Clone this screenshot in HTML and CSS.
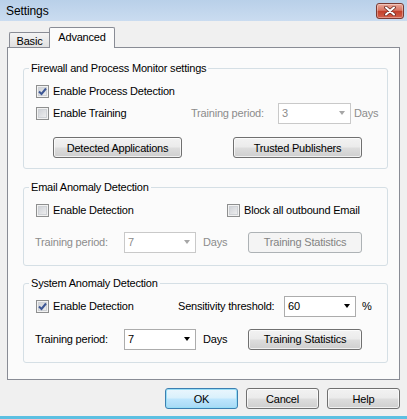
FILE: index.html
```html
<!DOCTYPE html>
<html>
<head>
<meta charset="utf-8">
<title>Settings</title>
<link rel="stylesheet" href="styles.css">
</head>
<body>
<div class="window">
  <div class="titlebar">
    <span class="title">Settings</span>
    <span class="close">
      <svg width="14" height="10" viewBox="0 0 14 10">
        <path d="M3 1.5 L11 8.5 M11 1.5 L3 8.5" stroke="#6a2a22" stroke-width="3.6" stroke-linecap="round"/>
        <path d="M3 1.5 L11 8.5 M11 1.5 L3 8.5" stroke="#ffffff" stroke-width="2" stroke-linecap="round"/>
      </svg>
    </span>
  </div>
  <div class="content">
    <div class="tabs">
      <div class="tab basic">Basic</div>
      <div class="tab active">Advanced</div>
    </div>
    <div class="panel">
      <fieldset class="group g1">
        <legend>Firewall and Process Monitor settings</legend>
        <div class="inner">
          <div class="row">
            <span class="check"><span class="box checked"><svg width="11" height="11" viewBox="0 0 11 11"><path d="M2 5.5 L4.5 8 L9 2.5" fill="none" stroke="#3d5795" stroke-width="2"/></svg></span>Enable Process Detection</span>
          </div>
          <div class="row">
            <span class="check c-training">
              <span class="box"></span>Enable Training</span>
            <span class="lbl dis l-period1">Training period:</span>
            <span class="combo dis w73"><span>3</span><i class="arrow"></i></span>
            <span class="unit dis u-days1">Days</span>
          </div>
          <div class="btnrow">
            <span class="btn wide">Detected Applications</span>
            <span class="btn wide">Trusted Publishers</span>
          </div>
        </div>
      </fieldset>

      <fieldset class="group g2">
        <legend>Email Anomaly Detection</legend>
        <div class="inner">
          <div class="row">
            <span class="check c-email"><span class="box"></span>Enable Detection</span>
            <span class="check"><span class="box"></span>Block all outbound Email</span>
          </div>
          <div class="row r2">
            <span class="lbl dis l-period">Training period:</span>
            <span class="combo dis w72"><span>7</span><i class="arrow"></i></span>
            <span class="unit dis u-days">Days</span>
            <span class="btn dis stats">Training Statistics</span>
          </div>
        </div>
      </fieldset>

      <fieldset class="group g3">
        <legend>System Anomaly Detection</legend>
        <div class="inner">
          <div class="row">
            <span class="check c-system"><span class="box checked"><svg width="11" height="11" viewBox="0 0 11 11"><path d="M2 5.5 L4.5 8 L9 2.5" fill="none" stroke="#3d5795" stroke-width="2"/></svg></span>Enable Detection</span>
            <span class="lbl l-sens">Sensitivity threshold:</span>
            <span class="combo w72"><span>60</span><i class="arrow"></i></span>
            <span class="unit u-pct">%</span>
          </div>
          <div class="row r2b">
            <span class="lbl l-period">Training period:</span>
            <span class="combo w72"><span>7</span><i class="arrow"></i></span>
            <span class="unit u-days">Days</span>
            <span class="btn stats">Training Statistics</span>
          </div>
        </div>
      </fieldset>
    </div>
    <div class="footer">
      <span class="btn dlg default">OK</span>
      <span class="btn dlg">Cancel</span>
      <span class="btn dlg">Help</span>
    </div>
  </div>
  <div class="frame-bottom"></div>
</div>
</body>
</html>
```

FILE: styles.css
```css
* { box-sizing: border-box; }
html, body { margin: 0; padding: 0; }
body {
  width: 407px;
  height: 419px;
  overflow: hidden;
  background: #f0f0f0;
  font-family: "Liberation Sans", Arial, sans-serif;
  font-size: 11px;
  letter-spacing: -0.2px;
  color: #000;
}
.window {
  height: 419px;
  display: flex;
  flex-direction: column;
}
.titlebar {
  height: 21px;
  flex: none;
  display: flex;
  align-items: center;
  justify-content: space-between;
  padding: 0 3px 0 6px;
  background: linear-gradient(#b9d0e9, #cadcf0);
}
.title { font-size: 12px; letter-spacing: -0.1px; color: #000; }
.close {
  width: 28px;
  height: 16px;
  display: flex;
  align-items: center;
  justify-content: center;
  border: 1px solid #7a3a32;
  border-radius: 3px;
  background: linear-gradient(#eaa99b 0%, #d87563 45%, #c2402b 52%, #d4604a 100%);
  box-shadow: inset 0 0 0 1px rgba(255,255,255,0.35);
}
.content { padding: 0 7px; }
.tabs {
  height: 26px;
  display: flex;
  align-items: flex-end;
  padding-left: 2px;
}
.tab {
  border: 1px solid #898c95;
  border-bottom: none;
  display: flex;
  align-items: center;
  justify-content: center;
}
.tab.basic {
  width: 40px;
  height: 15px;
  border-right: none;
  border-radius: 2px 0 0 0;
  background: linear-gradient(#f4f4f4, #e0e0e0);
  padding-top: 1px;
}
.tab.active {
  width: 66px;
  height: 21px;
  margin-bottom: -1px;
  background: #fbfbfb;
  position: relative;
  z-index: 1;
  border-radius: 2px 2px 0 0;
  padding-bottom: 2px;
}
.panel {
  height: 333px;
  border: 1px solid #898c95;
  background: #fbfbfb;
  padding: 13px 0 0 15px;
}
.group {
  margin: 0;
  padding: 0;
  width: 365px;
  min-width: 0;
  border: 1px solid #d5dfe5;
  border-radius: 3px;
}
.group.g2 { margin-top: 11px; }
.group.g3 { margin-top: 10px; }
legend {
  padding: 0 2px;
  margin-left: 5px;
  line-height: 14px;
  height: 14px;
}
.inner { padding: 5px 0 12px 11px; }
.g1 .inner { padding-bottom: 10px; }
.row {
  display: flex;
  align-items: center;
  height: 22px;
}
.row.r2 { margin-top: 10px; }
.row.r2b { margin-top: 11px; }
.check {
  display: flex;
  align-items: center;
  flex: none;
}
.box {
  width: 13px;
  height: 13px;
  margin: 0 4px 0 1px;
  border: 1px solid #8e8f8f;
  background: linear-gradient(135deg, #c9ccd2, #f4f4f4);
  box-shadow: inset 0 0 0 1px #f2f2f2, inset 0 0 0 2px #cfd2d6;
  display: flex;
  align-items: center;
  justify-content: center;
  flex: none;
}
.box svg { display: block; }
.c-training { width: 156px; }
.c-email { width: 191px; }
.c-system { width: 143px; }
.lbl { flex: none; }
.l-period1 { width: 87px; }
.l-period { width: 89px; }
.l-sens { width: 106px; }
.dis { color: #8c8c8c; }
.combo {
  flex: none;
  height: 21px;
  display: flex;
  align-items: center;
  justify-content: space-between;
  padding: 0 5px 0 3px;
  border: 1px solid #acacac;
  background: #fff;
}
.combo.dis { border-color: #c9c9c9; }
.w73 { width: 73px; }
.w72 { width: 72px; }
.arrow {
  width: 0;
  height: 0;
  border-left: 3.5px solid transparent;
  border-right: 3.5px solid transparent;
  border-top: 4px solid #000;
}
.combo.dis .arrow { border-top-color: #a6a6a6; }
.unit { flex: none; }
.u-days1 { margin-left: 3px; }
.u-days { margin-left: 7px; width: 45px; }
.u-pct { margin-left: 6px; }
.btn {
  flex: none;
  height: 21px;
  display: flex;
  align-items: center;
  justify-content: center;
  border: 1px solid #707070;
  border-radius: 3px;
  background: linear-gradient(#f2f2f2 0%, #ebebeb 48%, #dddddd 52%, #cfcfcf 100%);
  box-shadow: inset 0 0 0 1px rgba(255,255,255,0.7);
}
.btn.dis {
  border-color: #adb2b5;
  background: #f4f4f4;
  box-shadow: none;
  color: #838383;
}
.btnrow {
  display: flex;
  gap: 51px;
  margin-top: 13px;
  padding-left: 18px;
}
.btn.wide { width: 129px; }
.btn.stats { width: 114px; }
.footer {
  display: flex;
  justify-content: flex-end;
  gap: 8px;
  margin-top: 8px;
}
.btn.dlg { width: 73px; }
.btn.default {
  border-color: #3c7fb1;
  background: linear-gradient(#eaf6fd 0%, #d9f0fc 48%, #bee6fd 52%, #a7d9f5 100%);
  box-shadow: inset 0 0 0 1px #98def6;
}
.frame-bottom {
  margin-top: auto;
  height: 3px;
  background: #5cc0e2;
}
```
